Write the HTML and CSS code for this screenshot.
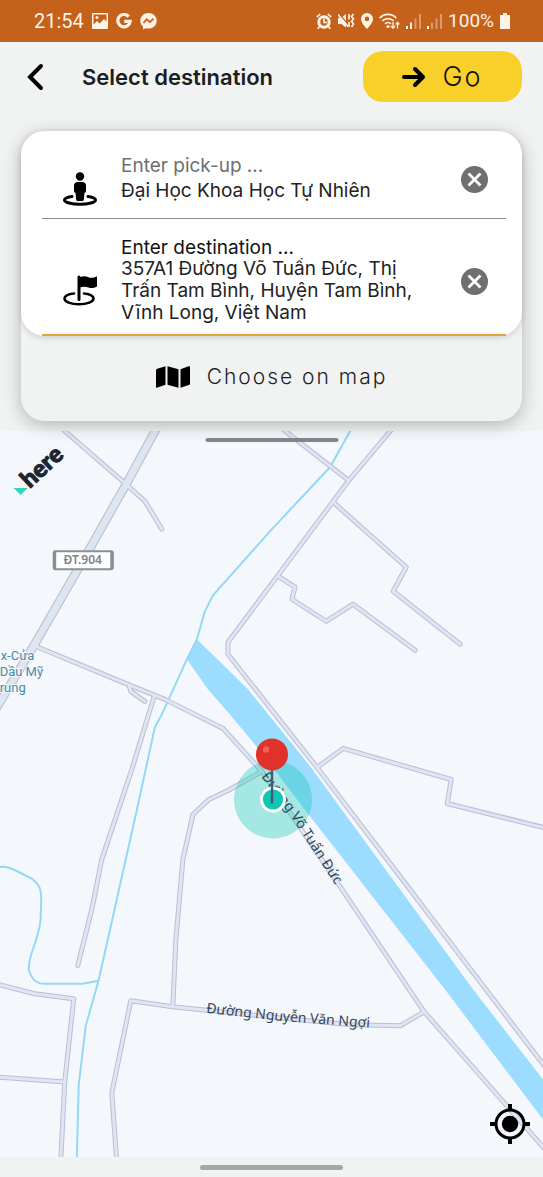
FILE: index.html
```html
<!DOCTYPE html>
<html lang="vi">
<head>
    <meta charset="UTF-8">
    <meta name="viewport" content="width=device-width, initial-scale=1.0">
    <title>Select destination</title>
    <link rel="stylesheet" href="styles.css">
</head>
<body>
    <div class="status-bar">
        <div class="status-left">
            <span class="status-text">21:54</span>
            <svg width="16" height="16" viewBox="0 0 16 16">
                <path fill="#fff3e6" fill-rule="evenodd" d="M1 0h14a1 1 0 0 1 1 1v14a1 1 0 0 1-1 1H1a1 1 0 0 1-1-1V1a1 1 0 0 1 1-1zM1.500 1.500v10L5 8l2.500 2.500L12 6l2.500 2.500v-7z"/>
                <circle cx="5" cy="4.500" r="1.500" fill="#fff3e6"/>
            </svg>
            <svg width="16" height="16" viewBox="0 0 16 16" fill="none" stroke="#fff3e6" stroke-width="3.200">
                <path d="M12.700 3.600A6.200 6.200 0 1 0 14.200 8.400H8.200"/>
            </svg>
            <svg width="17" height="17" viewBox="0 0 17 17">
                <path fill="#fff3e6" d="M8.500 0C3.700 0 .3 3.400.3 7.800c0 2.300 1 4.300 2.600 5.700l.1 2.900 2.600-1.200c.9.300 1.900.4 2.900.4 4.800 0 8.200-3.400 8.200-7.800S13.300 0 8.500 0z"/>
                <path fill="none" stroke="#c4611b" stroke-width="1.800" d="M3.500 10l3.200-3.800 3.300 2.900 3.500-3.500"/>
            </svg>
        </div>
        <div class="status-right">
            <svg width="16" height="17" viewBox="0 0 16 17" fill="none" stroke="#fff3e6">
                <circle cx="8" cy="9" r="5.200" stroke-width="3"/>
                <path stroke-width="1.700" d="M8 5.500V9.500h3M.8 4.200L4.200 1M15.200 4.200L11.800 1M3.500 13.500l-1.700 2.300M12.500 13.500l1.700 2.300"/>
            </svg>
            <svg width="17" height="16" viewBox="0 0 17 16">
                <path fill="#fff3e6" d="M0 5h3l5-4v13.500L3.500 11H0z"/>
                <path fill="none" stroke="#c4611b" stroke-width="1.300" d="M1.500 1l10 12.500"/>
                <path fill="none" stroke="#fff3e6" stroke-width="1.700" d="M0 1.500l10 12M11 1v5.500M11 9v5M15.500 1l-2 2.500 2 2.500-2 2.500 2 2.500-2 3"/>
            </svg>
            <svg width="12" height="16" viewBox="0 0 12 16">
                <path fill="#fff3e6" fill-rule="evenodd" d="M6 0a6 6 0 0 1 6 6c0 4-6 10-6 10S0 10 0 6a6 6 0 0 1 6-6zm0 3.600a2.300 2.300 0 1 0 0 4.600 2.300 2.300 0 0 0 0-4.600z"/>
            </svg>
            <svg width="21" height="16" viewBox="0 0 21 16" fill="none" stroke="#fff3e6" stroke-width="1.700">
                <path d="M.7 5.200C5 .2 13 .2 17.300 5.200M3.300 8c3-3.300 8.400-3.300 11.400 0M6 10.800c1.700-1.700 4.300-1.700 6 0"/>
                <circle cx="9" cy="13.500" r="1.600" fill="#fff3e6" stroke="none"/>
                <path stroke-width="1.300" d="M14 9v6M12 13l2 2.200 2-2.200M18.500 15.500v-6M16.700 11.500l1.800-2.200 1.800 2.200"/>
            </svg>
            <svg width="15" height="15" viewBox="0 0 15 15" fill="#fff3e6">
                <path d="M0 12h2v3H0zM4 8.500h2V15H4z"/>
                <path opacity=".4" d="M8.500 4.500h2V15h-2zM13 0h2v15h-2z"/>
            </svg>
            <svg width="15" height="15" viewBox="0 0 15 15" fill="#fff3e6">
                <path d="M0 12h2v3H0z"/>
                <path opacity=".4" d="M4 8.500h2V15H4zM8.500 4.500h2V15h-2zM13 0h2v15h-2z"/>
            </svg>
            <span class="status-text">100%</span>
            <svg width="10" height="16" viewBox="0 0 10 16">
                <path fill="#fff3e6" d="M3 0h4v2h3v14H0V2h3z"/>
            </svg>
        </div>
    </div>

    <main class="page">
        <section class="top">
            <header class="header">
                <button class="back-btn" type="button" aria-label="Back">
                    <svg width="17" height="28" viewBox="0 0 17 28" fill="none" stroke="#000" stroke-width="4" stroke-linecap="round">
                        <path d="M14 3L3 14l11 11"/>
                    </svg>
                </button>
                <h1 class="title">Select destination</h1>
                <button class="go-btn" type="button">
                    <svg width="24" height="22" viewBox="0 0 24 22" fill="none" stroke="#000" stroke-width="4" stroke-linecap="round" stroke-linejoin="round">
                        <path d="M2 11h19M13 3l8 8-8 8"/>
                    </svg>
                    Go
                </button>
            </header>

            <div class="panel">
                <form class="fields">
                    <div class="field">
                        <svg class="field-icon" width="34" height="34" viewBox="0 0 34 34">
                            <circle cx="17" cy="4.500" r="4.200"/>
                            <path d="M14.500 10h5c2 0 3.500 1.500 3.500 3.500V19c0 1.200-.8 1.800-1.500 2l-.6 6.500c-.1.900-.6 1.500-1.400 1.500h-5c-.8 0-1.300-.6-1.400-1.500L12.500 21c-.7-.2-1.500-.8-1.500-2v-5.500c0-2 1.500-3.500 3.500-3.500z"/>
                            <path fill="none" stroke="#000" stroke-width="3" stroke-linecap="round" d="M9 24.500c-4.500.7-7.500 2-7.500 3.500 0 2.400 7 4.300 15.500 4.300S32.500 30.400 32.500 28c0-1.500-3-2.800-7.500-3.500"/>
                        </svg>
                        <div class="field-body">
                            <label class="field-label" for="pickup">Enter pick-up ...</label>
                            <input class="field-value" id="pickup" type="text" value="Đại Học Khoa Học Tự Nhiên">
                        </div>
                        <button class="clear-btn" type="button" aria-label="Clear pick-up">
                            <svg width="27" height="27" viewBox="0 0 27 27">
                                <circle cx="13.500" cy="13.500" r="13.500" fill="#6f6f6f"/>
                                <path stroke="#fff" stroke-width="2.800" d="M7.500 7.500l12 12M19.500 7.500l-12 12"/>
                            </svg>
                        </button>
                    </div>
                    <div class="field field-active">
                        <svg class="field-icon" width="34" height="32" viewBox="0 0 34 32">
                            <path fill="none" stroke="#000" stroke-width="2.600" stroke-linecap="round" d="M11 18.500C5 19.200 1.500 21 1.500 23.500c0 3.300 6.300 5.800 14.500 5.800s14.500-2.500 14.500-5.800c0-2.500-3.500-4.300-9.500-5"/>
                            <path d="M14.500 2a1.500 1.500 0 0 1 3 0c3-1 5.500-.8 8 .2 2.500 1 5 .6 8.500-1v10.300c-3.500 1.800-6 2-8.500 1-2.500-1-5-1.200-8-.3V24.500a1.500 1.500 0 0 1-3 0z"/>
                        </svg>
                        <div class="field-body">
                            <label class="field-label" for="destination">Enter destination ...</label>
                            <textarea class="field-value" id="destination" rows="3">357A1 Đường Võ Tuấn Đức, Thị Trấn Tam Bình, Huyện Tam Bình, Vĩnh Long, Việt Nam</textarea>
                        </div>
                        <button class="clear-btn" type="button" aria-label="Clear destination">
                            <svg width="27" height="27" viewBox="0 0 27 27">
                                <circle cx="13.500" cy="13.500" r="13.500" fill="#6f6f6f"/>
                                <path stroke="#fff" stroke-width="2.800" d="M7.500 7.500l12 12M19.500 7.500l-12 12"/>
                            </svg>
                        </button>
                    </div>
                </form>
                <button class="choose-btn" type="button">
                    <svg width="34" height="22" viewBox="0 0 34 22">
                        <path d="M1.200 2.800L9.500.3v18.500L1.500 21.600C.7 21.900 0 21.500 0 20.700V4.500c0-.8.500-1.500 1.200-1.700zM11.500.3l11 3v18.400l-11-3zM24.500 3.300l8-3C33.300 0 34 .4 34 1.200v16.200c0 .8-.5 1.400-1.200 1.700l-8.300 2.600z"/>
                    </svg>
                    Choose on map
                </button>
            </div>
        </section>

        <section class="map">
            <svg class="map-canvas" viewBox="0 432 543 725" preserveAspectRatio="xMidYMin slice">
                <defs>
                    <path id="main-road" d="M159 425L127 484 88 553 35 645-4 710"/>
                    <g id="roads">
                        <path d="M57 425L125 484 145 502 162 530"/>
                        <path d="M36 647L128 685 165 700 223 729 262 772 338 884 389 960 424 1012 504 1103 547 1152"/>
                        <path d="M129 685L131 692 145 702"/>
                        <path d="M154 698L132 770 102 860 92 910 78 966"/>
                        <path d="M262 772L228 791 209 800 193 815 183 860 176 940 173 1006"/>
                        <path d="M396 425L349 481 228 643V655L317 768 400 877 463 960 547 1070"/>
                        <path d="M276 425L348 481"/>
                        <path d="M333 503L406 568 393 592 460 645"/>
                        <path d="M278 577L295 588 292 600 326 622 353 605 415 651"/>
                        <path d="M317 768L343 749 451 780 447 804 547 829"/>
                        <path d="M-4 984L35 994 74 999 65 1082 61 1162"/>
                        <path d="M-4 1077L65 1082"/>
                        <path d="M117 1162L112 1093 131 1001 173 1007 230 1013 350 1025 400 1026 424 1012"/>
                    </g>
                    <path id="duc-path" d="M261 777L291 817 338 890"/>
                    <path id="ngoi-path" d="M206 1013L280 1021 400 1030"/>
                </defs>

                <rect x="0" y="432" width="543" height="725" fill="#f4f8fc"/>

                <!-- water -->
                <path class="river" d="M197 640L248 690 311 768 473 990 543 1080V1120L445 990 307 813 255 745 230 715 208 690 187 660z"/>
                <path class="stream" d="M354 425L330 468 271 531 213 596 205 612 197 640 187 660 162 715 155 728 136 815 99 980 86 1026 79 1085 77 1162"/>
                <path class="stream" d="M-4 868C10 865 15 871 32 879 45 888 41 898 41 920 38 945 29 952 29 970 32 979 36 984 45 984H83L99 981"/>

                <!-- roads: casing first, then surface -->
                <use href="#main-road" class="main-casing"/>
                <use href="#roads" class="road-casing"/>
                <use href="#main-road" class="main-surface"/>
                <use href="#roads" class="road-surface"/>

                <g class="shield">
                    <rect x="54" y="552" width="59" height="18" rx="2"/>
                    <path d="M55 552v18M112 552v18"/>
                    <text x="83" y="565" text-anchor="middle">ĐT.904</text>
                </g>

                <g class="poi">
                    <text x="1" y="661">x-Cửa</text>
                    <text x="0" y="677">Dầu Mỹ</text>
                    <text x="0" y="693">rung</text>
                </g>

                <circle cx="273" cy="800" r="39" fill="#12c8b4" opacity=".35"/>
                <text class="street"><textPath href="#duc-path">Đường Võ Tuấn Đức</textPath></text>
                <text class="street"><textPath href="#ngoi-path">Đường Nguyễn Văn Ngợi</textPath></text>

                <!-- here logo -->
                <path fill="#35d3b9" d="M14 489h14l-7 7z"/>
                <text class="logo" transform="translate(30 490) rotate(-43)">here</text>

                <!-- pin -->
                <circle cx="273" cy="800" r="11.500" fill="#12c5b5" stroke="#fff" stroke-width="2.800"/>
                <path stroke="#46587a" stroke-width="2.400" d="M272 768v36"/>
                <circle cx="272" cy="755" r="16" fill="#e0322b"/>
                <circle cx="266" cy="750" r="3.200" fill="#f0615b"/>
            </svg>
            <span class="drag-handle"></span>
            <button class="locate-btn" type="button" aria-label="My location">
                <svg width="40" height="40" viewBox="0 0 40 40">
                    <circle cx="20" cy="20" r="14" fill="none" stroke="#000" stroke-width="3"/>
                    <circle cx="20" cy="20" r="8.200"/>
                    <path stroke="#000" stroke-width="4" d="M20 0v6M20 34v6M0 20h6M34 20h6"/>
                </svg>
            </button>
        </section>
    </main>

    <div class="nav-bar"><span class="nav-pill"></span></div>
</body>
</html>
```

FILE: styles.css
```css
* {
    box-sizing: border-box;
}
body {
    margin: 0;
    min-height: 100vh;
    display: flex;
    flex-direction: column;
    font-family: Inter, "Open Sans", sans-serif;
    color: #1c1e1f;
    background: #f1f3f3;
}
svg {
    display: block;
    flex-shrink: 0;
}
button {
    padding: 0;
    border: none;
    background: none;
    font-family: inherit;
    color: inherit;
    cursor: pointer;
}

/* status bar */
.status-bar {
    display: flex;
    justify-content: space-between;
    align-items: center;
    height: 42px;
    padding: 0 33px 0 34px;
    background: #c4611b;
    color: #fff3e6;
    font-family: Roboto, sans-serif;
}
.status-left, .status-right {
    display: flex;
    align-items: center;
    gap: 8px;
}
.status-right {
    gap: 6px;
}
.status-text {
    font-size: 20px;
    line-height: 24px;
}
.status-right .status-text {
    font-size: 19px;
}

.page {
    flex: 1;
    display: flex;
    flex-direction: column;
}
.top {
    position: relative;
    z-index: 1;
    padding: 9px 21px 0;
}

/* header */
.header {
    display: flex;
    align-items: center;
    padding-left: 6px;
}
.back-btn {
    width: 55px;
}
.title {
    flex: 1;
    margin: 0;
    font-size: 22px;
    line-height: 24px;
    font-weight: 600;
    white-space: nowrap;
}
.go-btn {
    display: flex;
    justify-content: center;
    align-items: center;
    gap: 16px;
    width: 159px;
    height: 51px;
    border-radius: 20px;
    background: #f9d02a;
    color: #111;
    font-size: 27px;
    font-weight: 300;
    letter-spacing: 2px;
}

/* search panel */
.panel {
    margin-top: 29px;
    border-radius: 24px;
    background: #f1f3f3;
    box-shadow: 0 4px 18px rgba(0, 0, 0, 0.25);
}
.fields {
    padding: 0 16px 0 21px;
    border-radius: 24px;
    background: #fff;
    box-shadow: 0 2px 6px rgba(0, 0, 0, 0.15);
}
.field {
    display: flex;
    align-items: center;
    gap: 24px;
    padding: 0 18px 0 21px;
    border-bottom: 1px solid #8c8c8c;
}
.field-icon {
    margin-top: 28px;
}
.field-body {
    flex: 1;
    min-width: 0;
    display: flex;
    flex-direction: column;
    gap: 3px;
    padding: 25px 12px 16px 0;
}
.field-label {
    color: #6f6f6f;
    font-size: 19px;
    line-height: 20px;
}
.field-value {
    display: block;
    width: 100%;
    height: 23px;
    padding: 0;
    border: none;
    outline: none;
    background: none;
    resize: none;
    overflow: hidden;
    color: #222;
    font-family: inherit;
    font-size: 19px;
    line-height: 22px;
}
.field-active {
    border-bottom: 2px solid #e6a03c;
}
.field-active .field-body {
    gap: 0;
    padding: 19px 12px 10px 0;
}
.field-active .field-label {
    color: #111;
}
.field-active .field-value {
    height: 66px;
}
.clear-btn {
    margin-top: 10px;
}
.choose-btn {
    display: flex;
    justify-content: center;
    align-items: center;
    gap: 17px;
    width: 100%;
    height: 85px;
    padding-bottom: 4px;
    font-size: 21px;
    font-weight: 300;
    letter-spacing: 2px;
}

/* map */
.map {
    position: relative;
    flex: 1;
    display: flex;
    margin-top: 10px;
    overflow: hidden;
}
.map-canvas {
    width: 100%;
    font-family: "Noto Sans", sans-serif;
}
.river {
    fill: #9bdcff;
}
.stream {
    fill: none;
    stroke: #93d9f5;
    stroke-width: 2;
}
.main-casing, .main-surface, .road-casing, .road-surface {
    fill: none;
    stroke-linecap: round;
    stroke-linejoin: round;
}
.main-casing {
    stroke: #b4bccd;
    stroke-width: 9;
}
.main-surface {
    stroke: #dde5f3;
    stroke-width: 7;
}
.road-casing {
    stroke: #b9bfd4;
    stroke-width: 5;
}
.road-surface {
    stroke: #e0e5f3;
    stroke-width: 3;
}
.shield {
    fill: #fff;
    stroke: #8b8e92;
    stroke-width: 2;
}
.shield path {
    stroke-width: 3;
}
.shield text {
    fill: #7d8186;
    stroke: none;
    font-size: 12px;
    font-weight: 600;
}
.poi {
    fill: #4a8ba5;
    stroke: #f4f8fc;
    stroke-width: 2;
    paint-order: stroke;
    font-family: Roboto, sans-serif;
    font-size: 13px;
}
.street {
    fill: #36475a;
    font-size: 14px;
}
.logo {
    fill: #1c2430;
    stroke: #1c2430;
    stroke-width: 1;
    font-family: Lato, sans-serif;
    font-size: 24px;
    font-weight: 900;
}
.drag-handle {
    position: absolute;
    top: 7px;
    left: 50%;
    width: 133px;
    height: 4px;
    border-radius: 2px;
    background: #858889;
    transform: translateX(-50%);
}
.locate-btn {
    position: absolute;
    right: 13px;
    bottom: 13px;
}

/* system navigation */
.nav-bar {
    display: flex;
    justify-content: center;
    align-items: center;
    height: 20px;
    background: #f1f2f2;
}
.nav-pill {
    width: 143px;
    height: 5px;
    border-radius: 3px;
    background: #a6a7a7;
}
```
